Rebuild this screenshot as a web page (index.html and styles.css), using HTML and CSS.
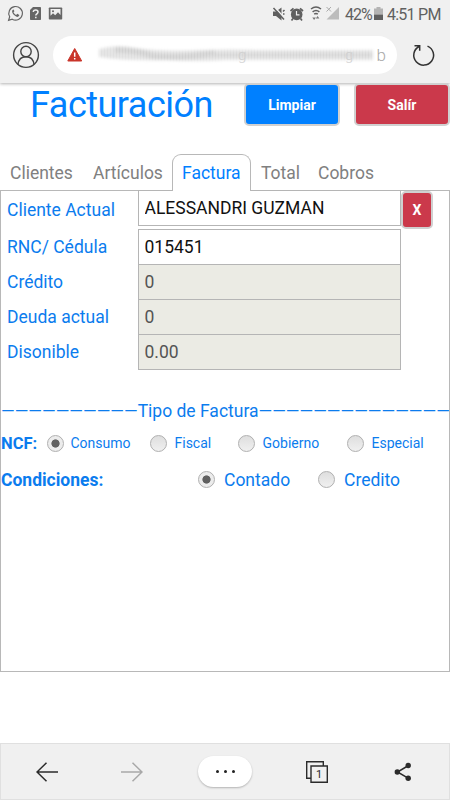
FILE: index.html
```
<!DOCTYPE html>
<html lang="es">
<head>
    <meta charset="UTF-8">
    <title>Facturación</title>
    <link rel="stylesheet" href="styles.css">
</head>
<body>
    <header class="browser">
        <div class="status">
            <svg class="notifications" width="64" height="28" viewBox="0 0 64 28">
                <path d="M8.6 20.3l1.1-3.6a6.8 6.8 0 1 1 2.5 2.5z" fill="none" stroke="#666" stroke-width="1.2"/>
                <path d="M13 9.8c-1.8 1.2-.5 3.8 1.1 5.3 1.8 1.8 4.1 2.6 5 .7l.2-.9-2.1-1.1-1 1.1c-1.3-.5-2.2-1.4-2.7-2.6l.9-1-.8-1.8z" fill="#666"/>
                <path d="M33 7h7.2q.8 0 .8.8v11.4q0 .8-.8.8h-9.4q-.8 0-.8-.8V10z" fill="#666"/>
                <path d="M33.3 12c0-2.8 4.7-2.6 4.7 0 0 1.8-2.2 1.8-2.2 3.5M35.8 16.7v1.6" fill="none" stroke="#f0f0f0" stroke-width="1.5"/>
                <path d="M49.5 7.5h12q.7 0 .7.7v10.6q0 .7-.7.7h-12q-.7 0-.7-.7V8.2q0-.7.7-.7z" fill="#666"/>
                <path d="M50.5 9h10v6l-2.5-2.8-2.8 3-2.2-2-2.5 2.6z" fill="#f0f0f0"/>
                <circle cx="53" cy="11.3" r="1" fill="#666"/>
            </svg>
            <div class="signals">
                <svg width="70" height="28" viewBox="270 0 70 28">
                    <path d="M273 11.5h3l5.5-4v13l-5.5-4.5h-3z" fill="#606060"/>
                    <path d="M275 7.5l9.500 10.500" stroke="#f0f0f0" stroke-width="1.5"/>
                    <path d="M273.500 8l10.500 11.500M283 11.500l1.500-1.500M283 14h1.500" stroke="#606060" stroke-width="1.5"/>
                    <circle cx="296.7" cy="14.4" r="5.800" fill="#606060"/>
                    <path d="M290.5 11l3-2.7M303 11l-3-2.7M293 18.5l-1.500 2M300.500 18.500l1.500 2" stroke="#606060" stroke-width="1.7"/>
                    <path d="M296.500 11v3.800h3" fill="none" stroke="#f0f0f0" stroke-width="1.2"/>
                    <path d="M311 9q5-4 10 0M312.600 11.800q3.400-2.700 6.800 0M314.200 14.200q1.800-1.300 3.600 0" fill="none" stroke="#606060" stroke-width="1.5"/>
                    <path d="M312.300 17.500h3.600l-1.800 2.500zM315.800 18.500h3.600l-1.800-2.500z" fill="#777"/>
                    <path d="M339 7v12.500h-12.500z" fill="#bcbcbc"/>
                    <path d="M326.500 7l4.500 4.500M331 7l-4.500 4.500" stroke="#aaa" stroke-width="1"/>
                </svg>
                <span class="percent">42%</span>
                <svg class="battery" width="9" height="28" viewBox="0 0 9 28">
                    <path d="M2.500 7h4v1.500H9v6H0v-6h2.500z" fill="#b4b4b4"/>
                    <path d="M0 14.500h9v5.500H0z" fill="#606060"/>
                </svg>
                <span class="clock">4:51 PM</span>
            </div>
        </div>
        <div class="address">
            <svg class="user" width="28" height="28" viewBox="0 0 28 28">
                <g fill="none" stroke="#444" stroke-width="1.4">
                    <circle cx="14" cy="14" r="12.4"/>
                    <circle cx="14" cy="10.5" r="5.2"/>
                    <path d="M6 23.500c.5-4.700 3.500-7.800 8-7.800s7.500 3.100 8 7.800"/>
                </g>
            </svg>
            <div class="url">
                <svg width="344" height="38" viewBox="53 36 344 38">
                    <defs>
                        <filter id="soft" x="-10%" y="-60%" width="120%" height="220%"><feGaussianBlur stdDeviation="1.7"/></filter>
                        <pattern id="lines" width="3" height="40" patternUnits="userSpaceOnUse"><path d="M1 0v40" stroke="#fff" stroke-opacity=".35"/></pattern>
                    </defs>
                    <path d="M74.700 48.500l7 12.500H67.800z" fill="#c9352b" stroke="#c9352b" stroke-linejoin="round"/>
                    <path d="M74.700 52.500v4.300M74.700 58v1.500" stroke="#fff" stroke-width="1.5"/>
                    <g filter="url(#soft)">
                        <path d="M99 49q18-5 36-1 30 4 66 2 30-1 60 0h112v10H225q-25 2-60 0-38 1-66-3z" fill="#e0e0e0"/>
                        <path d="M115 50q22 0 38 6 26 3 62-3" fill="none" stroke="#d0d0d0" stroke-width="6"/>
                        <path d="M208 55h164" stroke="#d2d2d2" stroke-width="3"/>
                    </g>
                    <path d="M95 42h279v24H95z" fill="url(#lines)"/>
                    <text x="238" y="60" class="ghost">g</text>
                    <text x="345" y="60" class="ghost">g</text>
                    <text x="376.5" y="60.500" class="letter">b</text>
                </svg>
            </div>
            <svg class="reload" width="24" height="24" viewBox="0 0 24 24">
                <path d="M15.500 3.100A9.900 9.900 0 1 1 7 3.500M2.500 2.800h5.200v5" fill="none" stroke="#333" stroke-width="1.5"/>
            </svg>
        </div>
    </header>

    <main>
        <div class="top">
            <h1>Facturación</h1>
            <button class="btn primary">Limpiar</button>
            <button class="btn danger">Salír</button>
        </div>

        <nav class="tabs">
            <a class="tab clientes">Clientes</a>
            <a class="tab articulos">Artículos</a>
            <a class="tab active">Factura</a>
            <a class="tab total">Total</a>
            <a class="tab cobros">Cobros</a>
        </nav>

        <section class="panel">
            <div class="row client">
                <label>Cliente Actual</label>
                <input type="text" class="name" value="ALESSANDRI GUZMAN">
                <button class="btn danger clear">X</button>
            </div>
            <div class="row"><label>RNC/ Cédula</label><input type="text" value="015451"></div>
            <div class="row"><label>Crédito</label><input type="text" value="0" disabled></div>
            <div class="row"><label>Deuda actual</label><input type="text" value="0" disabled></div>
            <div class="row"><label>Disonible</label><input type="text" value="0.00" disabled></div>

            <div class="divider"><span class="dash">——————————</span><span>Tipo de Factura</span><span class="dash">——————————————</span></div>

            <div class="ncf">
                <b>NCF:</b>
                <label><i class="radio on"></i>Consumo</label>
                <label><i class="radio"></i>Fiscal</label>
                <label><i class="radio"></i>Gobierno</label>
                <label><i class="radio"></i>Especial</label>
            </div>
            <div class="terms">
                <b>Condiciones:</b>
                <label><i class="radio on"></i>Contado</label>
                <label><i class="radio"></i>Credito</label>
            </div>
        </section>
    </main>

    <footer class="toolbar">
        <svg width="22" height="20" viewBox="0 0 22 20"><path d="M22 10H1M10.500.7L1 10l9.500 9.300" fill="none" stroke="#2b2b2b" stroke-width="1.5"/></svg>
        <svg width="22" height="20" viewBox="0 0 22 20"><path d="M0 10h21M11.500.7L21 10l-9.500 9.300" fill="none" stroke="#a8a8a8" stroke-width="1.5"/></svg>
        <div class="more"><i></i><i></i><i></i></div>
        <div class="pages">
            <svg width="22" height="22" viewBox="0 0 22 22">
                <path d="M5 17.300H.7V.7h16.600V5M5 5h16.300v16.300H5z" fill="none" stroke="#2b2b2b" stroke-width="1.4"/>
                <text x="9.9" y="17">1</text>
            </svg>
        </div>
        <svg width="18" height="20" viewBox="0 0 18 20">
            <path d="M14.500 3.500L3.500 10l11 6.300" fill="none" stroke="#2b2b2b" stroke-width="1.5"/>
            <g fill="#2b2b2b"><circle cx="14.2" cy="3.5" r="2.7"/><circle cx="3.300" cy="10" r="2.7"/><circle cx="14.2" cy="16.3" r="2.7"/></g>
        </svg>
    </footer>
</body>
</html>
```
FILE: styles.css
```
*{
    box-sizing: border-box;
}
body{
    margin:0;
    height:800px;
    display: flex;
    flex-direction: column;
    overflow: hidden;
    background:#fff;
    color:#0b7cee;
    font-family: Roboto, sans-serif;
    font-size: 17.5px;
}
svg{
    display: block;
    flex: none;
}
.browser{
    height:83px;
    background:#f0f0f0;
    box-shadow: 0 1px 3px rgba(0, 0, 0, 0.3);
    flex: none;
}
.status{
    height:28px;
    display: flex;
    justify-content: space-between;
    color:#606060;
    line-height: 29px;
    padding-right: 10px;
}
.signals{
    display: flex;
    white-space: nowrap;
}
.percent{
    width:28px;
    margin-left: 5px;
    font-size: 16px;
    letter-spacing: -1px;
}
.battery{
    margin-left: 1px;
}
.clock{
    width:53px;
    margin-left: 4px;
    font-size: 16px;
    letter-spacing: -0.75px;
}
.address{
    height:55px;
    display: flex;
    align-items: center;
    padding: 0 14px 2px 12px;
}
.url{
    width:344px;
    height:38px;
    margin-left: 13px;
    border-radius: 19px;
    background:#fff;
    overflow: hidden;
    flex: none;
}
.ghost{
    font-size: 15px;
    font-weight: 300;
    fill:#d0d0d0;
}
.letter{
    font-size: 17px;
    font-weight: 300;
    fill:#aaa;
}
.reload{
    margin-left: 15px;
}
main{
    flex: 1;
}
.top{
    height:71px;
    display: flex;
    align-items: flex-start;
    padding-left: 30px;
}
h1{
    width:214px;
    margin:0;
    color:#0080ff;
    font-size: 36px;
    font-weight: 400;
    letter-spacing: -0.5px;
    line-height: 44px;
    flex: none;
}
.btn{
    width:96px;
    height:43px;
    padding:0;
    border: 2px solid #d0d0d0;
    border-radius: 5px;
    color:#fff;
    font-family: Roboto, sans-serif;
    font-size: 14px;
    font-weight: 700;
    flex: none;
}
.top .btn{
    margin-right: 14px;
}
.top .danger{
    margin-right: 0;
}
.primary{
    background:#0080ff;
}
.danger{
    background:#cb394b;
}
.tabs{
    height:37px;
    display: flex;
    margin-bottom: -1px;
    position: relative;
}
.tab{
    color:#808080;
    line-height: 38px;
}
.clientes{
    width:83px;
    padding-left: 10px;
}
.articulos{
    width:89px;
    padding-left: 10px;
}
.active{
    width:79px;
    padding-left: 9px;
    color:#0080ff;
    background:#fff;
    border: 1px solid #b8b8b8;
    border-bottom: none;
    border-radius: 9px 9px 0 0;
    line-height: 36px;
}
.total{
    width:67px;
    padding-left: 10px;
}
.panel{
    height:482px;
    border: 1px solid #b8b8b8;
}
.row{
    height:35px;
    display: flex;
}
.row label{
    width:137px;
    padding-left: 6px;
    line-height: 36px;
}
.row input{
    width:263px;
    height:36px;
    padding: 0 5.5px;
    border: 1px solid #b5b5b5;
    border-radius: 0;
    background:#fff;
    color:#111;
    font-family: Roboto, sans-serif;
    font-size: 17.5px;
}
.row input:disabled{
    background:#ebebe4;
    color:#545454;
}
.client{
    height:38px;
}
.client label{
    line-height: 38px;
}
.client .name{
    margin-top: -1px;
}
.clear{
    width:32px;
    height:38px;
}
.divider{
    margin-top: 31px;
    height:22px;
    display: flex;
    overflow: hidden;
    white-space: nowrap;
    line-height: 22px;
}
.ncf,.terms{
    display: grid;
    align-items: center;
}
.ncf{
    height:42px;
    grid-template-columns: 45.5px 103px 88px 109px 1fr;
    font-size: 14px;
}
.ncf b{
    font-size: 16.5px;
}
.terms{
    height:31px;
    grid-template-columns: 197px 120px 1fr;
}
.ncf label,.terms label{
    display: flex;
    align-items: center;
    gap: 7px;
}
.ncf label + label{
    gap: 8px;
}
.terms label{
    gap: 9px;
}
.radio{
    width:17px;
    height:17px;
    border: 1px solid #b0b0b0;
    border-radius: 50%;
    background: linear-gradient(#dedede, #f0f0f0);
    flex: none;
}
.radio.on{
    background: radial-gradient(circle, #606060 3.7px, #ececec 4.5px);
}
.toolbar{
    height:57px;
    display: flex;
    align-items: center;
    background:#f0f0f0;
    border: 1px solid #e0e0e0;
    padding-left: 35px;
}
.toolbar > svg + svg{
    margin-left: 63px;
}
.more{
    width:54px;
    height:31px;
    margin-left: 55px;
    display: flex;
    justify-content: center;
    align-items: center;
    gap: 5px;
    border-radius: 16px;
    background:#fff;
    box-shadow: 0 1px 2px rgba(0, 0, 0, 0.25);
}
.more i{
    width:3px;
    height:3px;
    border-radius: 50%;
    background:#222;
}
.pages{
    margin-left: 54px;
    margin-right: 66px;
}
.pages text{
    font-size: 11px;
    fill:#2b2b2b;
}
```
